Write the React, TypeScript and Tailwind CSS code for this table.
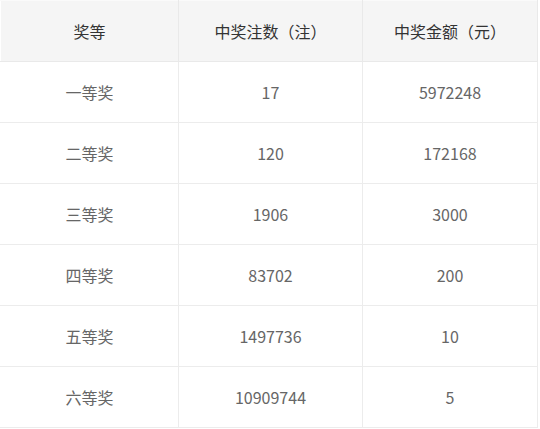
const rows = [
  ['一等奖', '17', '5972248'],
  ['二等奖', '120', '172168'],
  ['三等奖', '1906', '3000'],
  ['四等奖', '83702', '200'],
  ['五等奖', '1497736', '10'],
  ['六等奖', '10909744', '5'],
]

export default function App() {
  return (
    <div className="h-[429px] w-[540px] bg-white" style={{ fontFamily: '"Noto Sans CJK SC", "Noto Sans", sans-serif' }}>
      <table className="w-[537px] table-fixed border-collapse text-[16px]">
        <colgroup>
          <col className="w-[178px]" />
          <col className="w-[184px]" />
          <col className="w-[175px]" />
        </colgroup>
        <thead>
          <tr className="h-[61px] bg-[#f5f5f5] text-[#333]">
            <th className="border border-t-[#fafafa] border-l-transparent border-r-[#e9e9e9] border-b-[#e9e9e9] text-center font-normal">奖等</th>
            <th className="border border-t-[#fafafa] border-[#e9e9e9] text-center font-normal">中奖注数（注）</th>
            <th className="border border-t-[#fafafa] border-[#e9e9e9] text-center font-normal">中奖金额（元）</th>
          </tr>
        </thead>
        <tbody>
          {rows.map((r) => (
            <tr key={r[0]} className="h-[61px] text-[#666]">
              <td className="border border-l-transparent border-[#ececec] text-center">{r[0]}</td>
              <td className="border border-[#ececec] text-center">{r[1]}</td>
              <td className="border border-[#ececec] text-center">{r[2]}</td>
            </tr>
          ))}
        </tbody>
      </table>
    </div>
  )
}
